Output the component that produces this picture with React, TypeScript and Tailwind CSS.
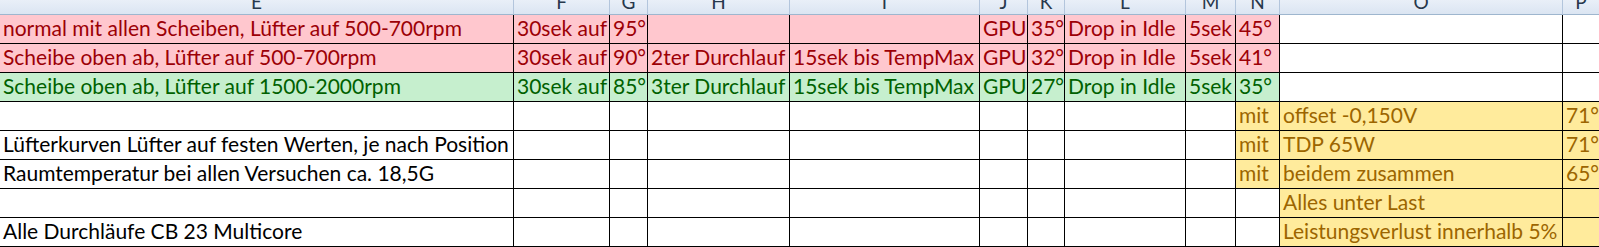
type Tone = 'bad' | 'good' | 'neutral' | 'none';

const columns = ['E', 'F', 'G', 'H', 'I', 'J', 'K', 'L', 'M', 'N', 'O', 'P'];

const toneClass: Record<Tone, string> = {
  bad: 'bg-[#ffc7ce] text-[#9c0006]',
  good: 'bg-[#c6efce] text-[#006100]',
  neutral: 'bg-[#ffeb9c] text-[#9c6500]',
  none: 'bg-white text-black',
};

type Cell = { text?: string; tone?: Tone };

const bad = (t = ''): Cell => ({ text: t, tone: 'bad' });
const good = (t = ''): Cell => ({ text: t, tone: 'good' });
const yel = (t = ''): Cell => ({ text: t, tone: 'neutral' });
const plain = (t = ''): Cell => ({ text: t, tone: 'none' });

const rows: Cell[][] = [
  [
    bad('normal mit allen Scheiben, Lüfter auf 500-700rpm'),
    bad('30sek auf'),
    bad('95°'),
    bad(),
    bad(),
    bad('GPU'),
    bad('35°'),
    bad('Drop in Idle'),
    bad('5sek'),
    bad('45°'),
    plain(),
    plain(),
  ],
  [
    bad('Scheibe oben ab, Lüfter auf 500-700rpm'),
    bad('30sek auf'),
    bad('90°'),
    bad('2ter Durchlauf'),
    bad('15sek bis TempMax'),
    bad('GPU'),
    bad('32°'),
    bad('Drop in Idle'),
    bad('5sek'),
    bad('41°'),
    plain(),
    plain(),
  ],
  [
    good('Scheibe oben ab, Lüfter auf 1500-2000rpm'),
    good('30sek auf'),
    good('85°'),
    good('3ter Durchlauf'),
    good('15sek bis TempMax'),
    good('GPU'),
    good('27°'),
    good('Drop in Idle'),
    good('5sek'),
    good('35°'),
    plain(),
    plain(),
  ],
  [plain(), plain(), plain(), plain(), plain(), plain(), plain(), plain(), plain(), yel('mit'), yel('offset -0,150V'), yel('71°')],
  [
    plain('Lüfterkurven Lüfter auf festen Werten, je nach Position'),
    plain(), plain(), plain(), plain(), plain(), plain(), plain(), plain(),
    yel('mit'), yel('TDP 65W'), yel('71°'),
  ],
  [
    plain('Raumtemperatur bei allen Versuchen ca. 18,5G'),
    plain(), plain(), plain(), plain(), plain(), plain(), plain(), plain(),
    yel('mit'), yel('beidem zusammen'), yel('65°'),
  ],
  [plain(), plain(), plain(), plain(), plain(), plain(), plain(), plain(), plain(), plain(), yel('Alles unter Last'), yel()],
  [
    plain('Alle Durchläufe CB 23 Multicore'),
    plain(), plain(), plain(), plain(), plain(), plain(), plain(), plain(),
    plain(), yel('Leistungsverlust innerhalb 5%'), yel(),
  ],
];

export default function App() {
  return (
    <div
      className="w-[1599px] h-[247px] overflow-hidden bg-white"
      style={{ fontFamily: 'Lato, "Open Sans", sans-serif' }}
    >
      <div className="grid grid-cols-[514px_96px_38px_142px_190px_48px_37px_121px_50px_44px_283px_1fr]">
        {columns.map((c, i) => (
          <div
            key={c}
            className={`h-[15px] overflow-hidden flex flex-col items-center bg-gradient-to-b from-[#e9eff8] to-[#dbe5f2] border-b border-[#9eb6ce] ${
              i < columns.length - 1 ? 'border-r border-r-[#b3c5dc]' : ''
            }`}
          >
            <div className="-mt-[8px] text-[19px] leading-[20px] text-[#27384c]">{c}</div>
          </div>
        ))}
        {rows.map((row, r) =>
          row.map((cell, i) => (
            <div
              key={`${r}-${i}`}
              className={`h-[29px] overflow-hidden whitespace-nowrap px-[3px] text-[21px] leading-[26px] border-b border-black ${
                i < row.length - 1 ? 'border-r' : ''
              } ${toneClass[cell.tone ?? 'none']}`}
            >
              {cell.text}
            </div>
          ))
        )}
      </div>
    </div>
  );
}
